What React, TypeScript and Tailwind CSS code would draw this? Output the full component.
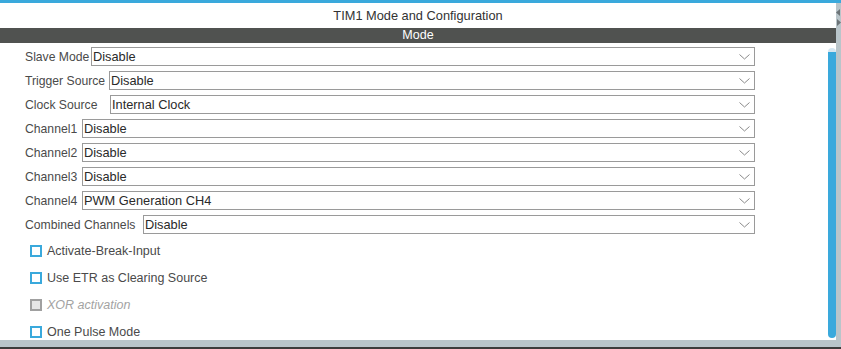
import React from "react";

const selects: { label: string; value: string; w: string }[] = [
  { label: "Slave Mode", value: "Disable", w: "w-[66px]" },
  { label: "Trigger Source", value: "Disable", w: "w-[84px]" },
  { label: "Clock Source", value: "Internal Clock", w: "w-[85px]" },
  { label: "Channel1", value: "Disable", w: "w-[57px]" },
  { label: "Channel2", value: "Disable", w: "w-[57px]" },
  { label: "Channel3", value: "Disable", w: "w-[57px]" },
  { label: "Channel4", value: "PWM Generation CH4", w: "w-[57px]" },
  { label: "Combined Channels", value: "Disable", w: "w-[118px]" },
];

const checks: { label: string; disabled?: boolean }[] = [
  { label: "Activate-Break-Input" },
  { label: "Use ETR as Clearing Source" },
  { label: "XOR activation", disabled: true },
  { label: "One Pulse Mode" },
];

function Chevron() {
  return (
    <svg width="11" height="6" viewBox="0 0 11 6" className="mr-[4px] shrink-0">
      <path d="M0.5 0.5 L5.5 5 L10.5 0.5" fill="none" stroke="#8a8a8a" strokeWidth="1" />
    </svg>
  );
}

function SelectRow({ label, value, w }: { label: string; value: string; w: string }) {
  return (
    <div className="flex h-[19px] w-[730px] items-center">
      <span className={`${w} shrink-0 whitespace-nowrap pt-[2px] text-[12.2px] leading-none text-[#4a4a4a]`}>
        {label}
      </span>
      <div className="flex h-[19px] flex-1 items-center justify-between border border-[#9a9a9a] bg-white">
        <span className="pl-[1px] pt-[2px] text-[12.8px] leading-none text-[#2a2a2a]">{value}</span>
        <Chevron />
      </div>
    </div>
  );
}

function CheckRow({ label, disabled }: { label: string; disabled?: boolean }) {
  return (
    <div className="flex h-[12px] items-center gap-[5px] pl-[5px]">
      <span
        className={
          disabled
            ? "h-[12px] w-[12px] border-2 border-[#a0a0a0] bg-[#e6e6e6]"
            : "h-[12px] w-[12px] border-2 border-[#3aa9dc] bg-white"
        }
      />
      <span
        className={
          disabled
            ? "text-[12.5px] italic leading-none text-[#a3a3a3]"
            : "text-[12.5px] leading-none text-[#4a4a4a]"
        }
      >
        {label}
      </span>
    </div>
  );
}

export default function App() {
  return (
    <div className="flex h-[349px] w-[841px] flex-col overflow-hidden bg-white font-['Liberation_Sans',Arial,sans-serif]">
      <div className="h-[3px] bg-[#3aa9dc]" />
      <div className="flex flex-1">
        <div className="flex flex-1 flex-col">
          <div className="flex h-[25px] items-center justify-center text-[12.8px] text-[#333]">
            TIM1 Mode and Configuration
          </div>
          <div className="flex h-[15px] items-center justify-center bg-[#505250] text-[12.5px] leading-none text-white">
            Mode
          </div>
          <div className="flex flex-1">
            <div className="flex flex-1 flex-col pl-[25px] pt-[4px]">
              <div className="flex flex-col gap-[5px]">
                {selects.map((s) => (
                  <SelectRow key={s.label} {...s} />
                ))}
              </div>
              <div className="mt-[11px] flex flex-col gap-[15px]">
                {checks.map((c) => (
                  <CheckRow key={c.label} {...c} />
                ))}
              </div>
            </div>
            <div className="flex w-[8px] flex-col pt-[5px] pb-[2px]">
              <div className="h-[4px] rounded-t-[4px] bg-[#d5e6f0]" />
              <div className="flex-1 rounded-b-[4px] bg-[#3aa9dc]" />
            </div>
          </div>
        </div>
        <div className="flex w-[5px] flex-col items-end gap-[3px] bg-[#b9c5ca] pt-[6px]">
          <svg width="5" height="7" viewBox="0 0 5 7">
            <path d="M4 0 L0 3.5 L4 7 Z" fill="#6c7478" />
          </svg>
          <svg width="5" height="7" viewBox="0 0 5 7">
            <path d="M1 0 L5 3.5 L1 7 Z" fill="#6c7478" />
          </svg>
        </div>
      </div>
      <div className="h-[7px] bg-[#b9c5ca]" />
      <div className="h-[2px] bg-[#3c3c3c]" />
    </div>
  );
}
